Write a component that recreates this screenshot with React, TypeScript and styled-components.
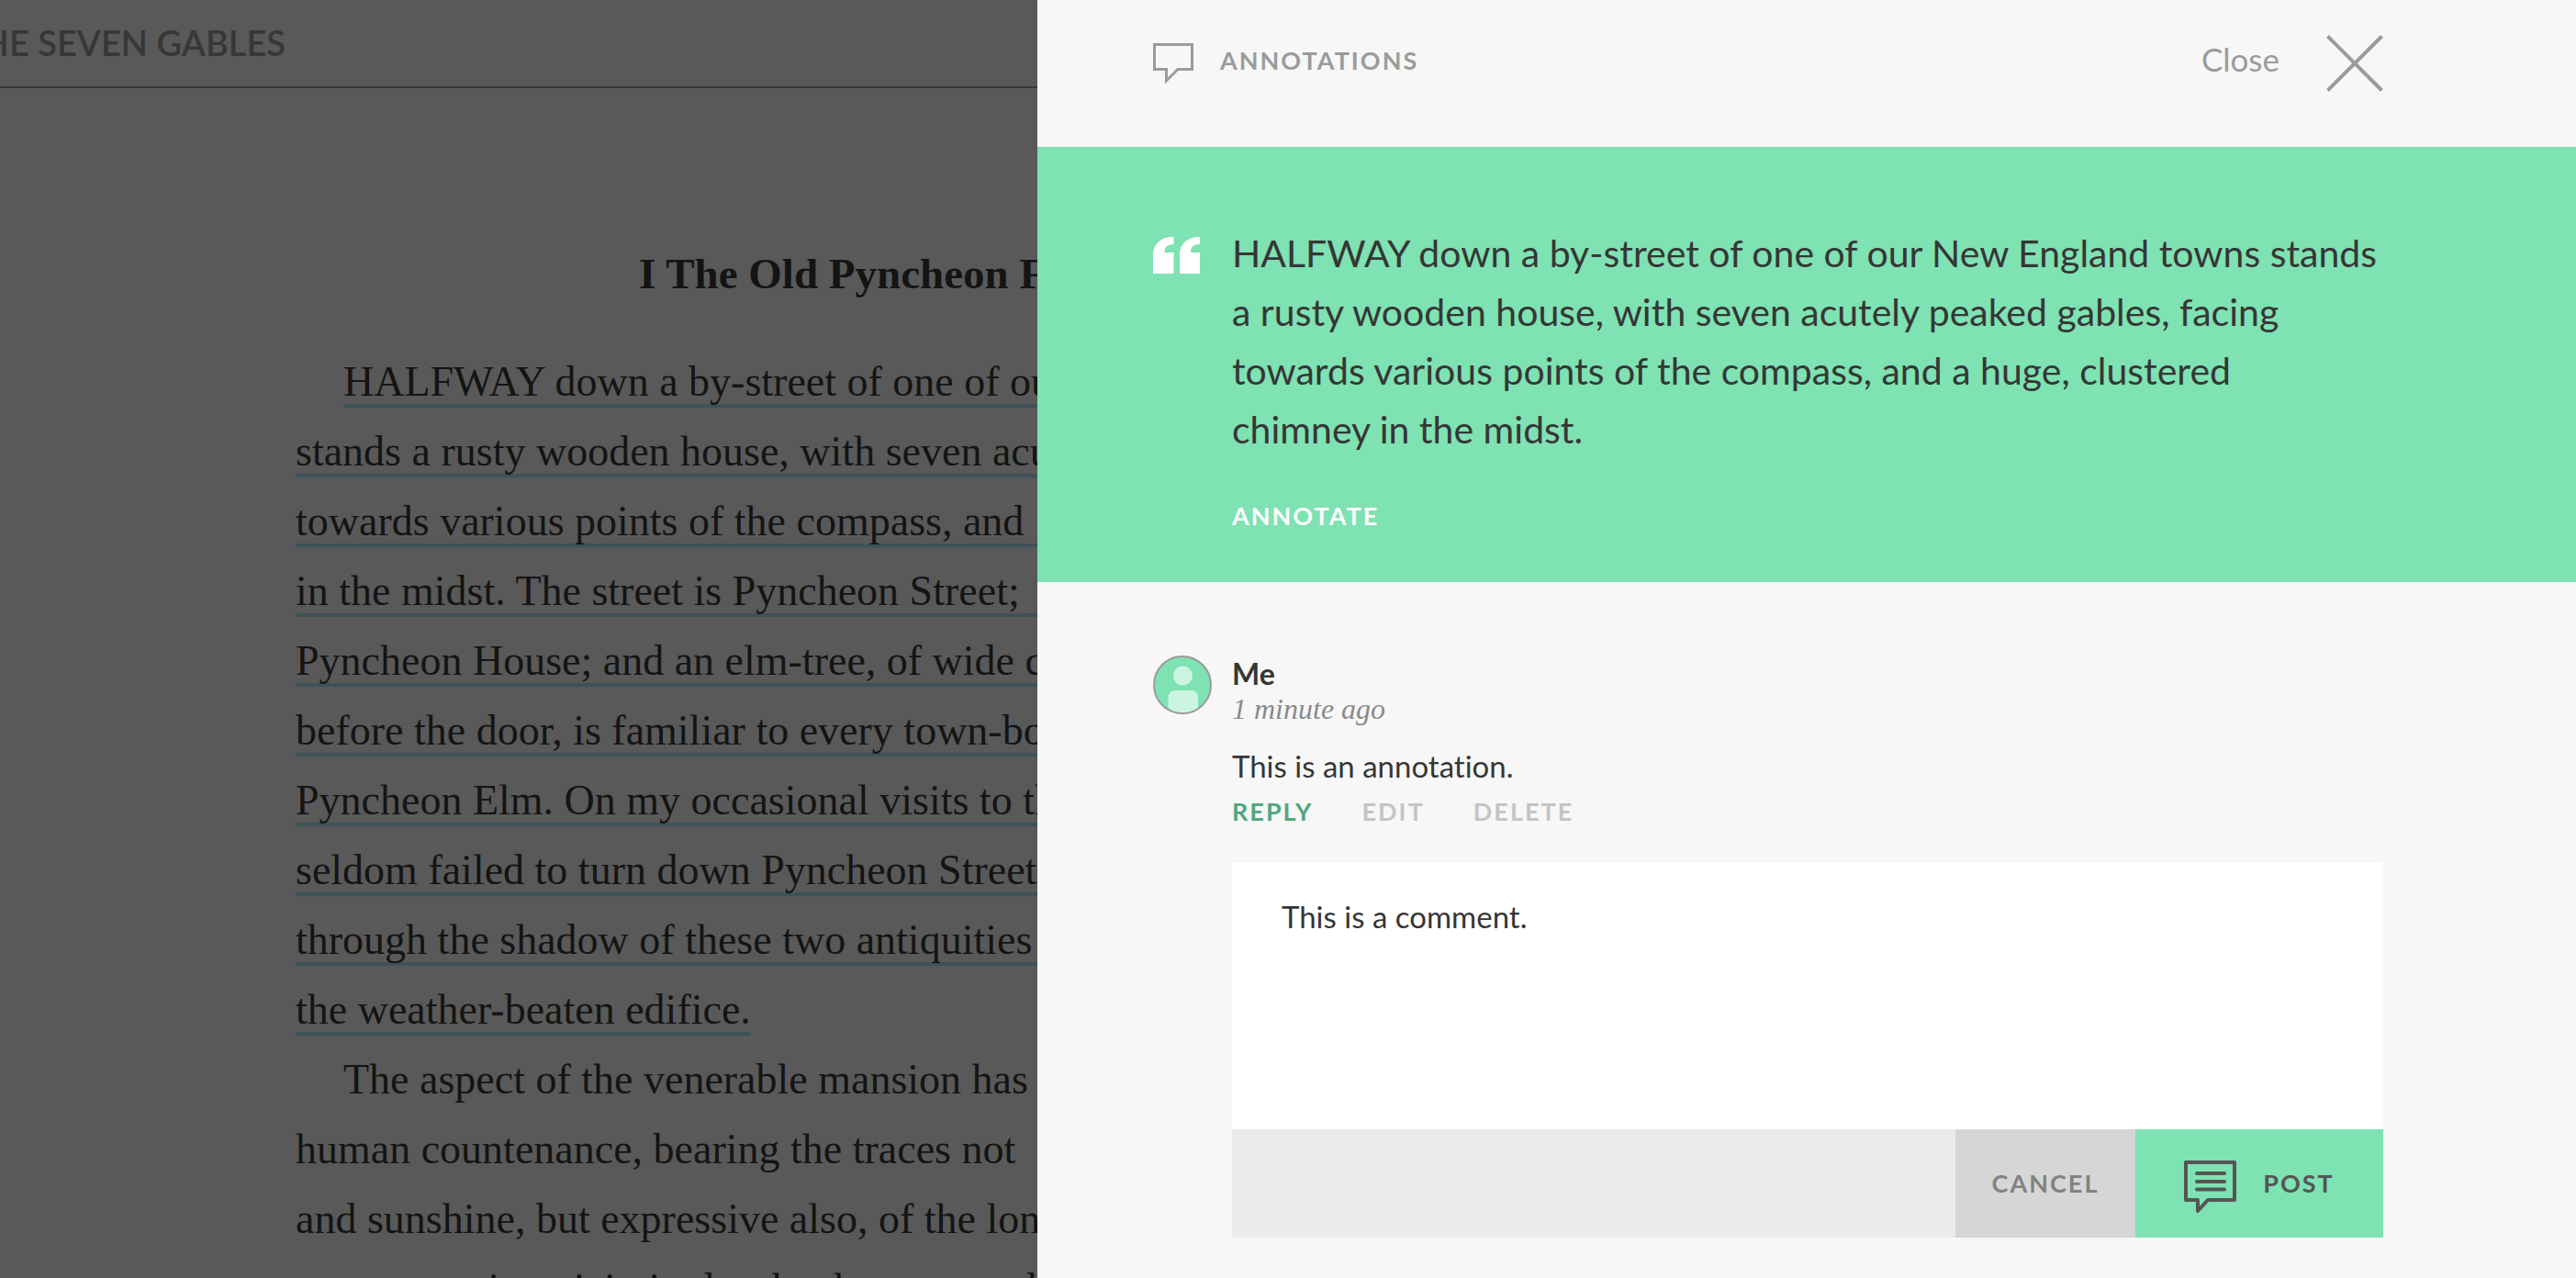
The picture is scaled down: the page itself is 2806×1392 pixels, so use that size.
import React, { useState } from 'react';
import styled, { createGlobalStyle, css } from 'styled-components';

const sans = "Lato, 'Open Sans', sans-serif";
const serif = "'Liberation Serif', 'Times New Roman', serif";
const mint = '#7ee2b2';
const ink = '#363636';

const GlobalStyle = createGlobalStyle`
  *, *::before, *::after { box-sizing: border-box; }
  body { margin: 0; background: #f7f7f7; }
  h1, h2, p, blockquote { margin: 0; }
  button, textarea { font: inherit; font-variant-ligatures: none; }
`;

const Screen = styled.div`
  display: grid;
  grid-template-columns: minmax(0, 565fr) minmax(0, 838fr);
  height: 100vh;
  overflow: hidden;
  font-family: ${sans};
`;

const Reader = styled.main`
  min-width: 0;
  overflow: hidden;
  background: #595959;
  color: #141414;
  font-family: ${serif};
`;

const ReaderHeader = styled.header`
  display: flex;
  align-items: center;
  justify-content: flex-end;
  width: 311px;
  height: 94px;
  padding-bottom: 3px;
`;

const Rule = styled.div`
  height: 2px;
  background: #373737;
`;

const BookTitle = styled.span`
  font: 600 38px/48px ${sans};
  color: #373737;
  white-space: nowrap;
`;

const Chapter = styled.article`
  padding: 164px 0 0 322px;
  font-size: 46px;
  line-height: 76px;
  white-space: nowrap;
`;

const ChapterTitle = styled.h1`
  padding: 0 0 42px 374px;
  font-size: 47px;
  line-height: 76px;
`;

const Line = styled.span<{ $indent?: boolean; $marked?: boolean; $last?: boolean }>`
  display: block;
  width: ${(p) => (p.$last ? 'fit-content' : 'auto')};
  margin-left: ${(p) => (p.$indent ? 52 : 0)}px;
  ${(p) =>
    p.$marked &&
    css`
      background: linear-gradient(#3e5258, #3e5258) 0 62px / 100% 4px no-repeat;
    `}
`;

const Panel = styled.aside`
  min-width: 0;
  background: #f7f7f7;
  color: ${ink};
  font-variant-ligatures: none;
`;

const gutters = css`
  padding-left: 126px;
  padding-right: 210px;
`;

const PanelHeader = styled.header`
  ${gutters}
  display: flex;
  align-items: flex-start;
  justify-content: space-between;
  height: 160px;
  padding-top: 38px;
  color: #9b9b9b;
`;

const PanelTitle = styled.h2`
  display: flex;
  align-items: flex-start;
  gap: 29px;
  padding-top: 8px;
  font-size: 27px;
  line-height: 40px;
  letter-spacing: 2px;
`;

const CloseButton = styled.button`
  display: flex;
  align-items: flex-start;
  gap: 51px;
  padding: 0;
  border: 0;
  background: none;
  color: inherit;
  font-size: 35px;
  line-height: 52px;
`;

const Quote = styled.section`
  ${gutters}
  display: flex;
  align-items: flex-start;
  gap: 35px;
  padding-top: 84px;
  padding-bottom: 54px;
  background: ${mint};
`;

const QuoteMark = styled.svg`
  flex: none;
  margin-top: 14px;
`;

const QuoteBody = styled.div`
  min-width: 0;
  flex: 1;
`;

const Passage = styled.blockquote`
  margin-bottom: 44px;
  font-size: 41px;
  line-height: 64px;
`;

const TextButton = styled.button<{ $color: string }>`
  display: block;
  padding: 0;
  border: 0;
  background: none;
  color: ${(p) => p.$color};
  font-size: 27px;
  font-weight: 700;
  line-height: 36px;
  letter-spacing: 2px;
`;

const Comment = styled.section`
  ${gutters}
  display: flex;
  align-items: flex-start;
  gap: 22px;
  padding-top: 80px;
`;

const CommentBody = styled.div`
  min-width: 0;
  flex: 1;
`;

const Author = styled.h2`
  font-size: 32px;
  line-height: 40px;
`;

const Time = styled.p`
  font: italic 32px/36px ${serif};
  color: #8a8a8a;
`;

const CommentText = styled.p`
  margin-top: 22px;
  font-size: 33px;
  line-height: 44px;
`;

const Actions = styled.div`
  display: flex;
  gap: 53px;
  margin: 10px 0 38px;
`;

const ReplyForm = styled.form`
  display: flex;
  flex-direction: column;
`;

const ReplyBox = styled.textarea`
  display: block;
  width: 100%;
  height: 290px;
  padding: 36px 54px;
  border: 0;
  outline: 0;
  resize: none;
  background: #fff;
  color: ${ink};
  font-size: 33px;
  line-height: 44px;
`;

const FormBar = styled.div`
  display: flex;
  justify-content: flex-end;
  height: 118px;
  background: #ebebeb;
`;

const BarButton = styled.button<{ $primary?: boolean }>`
  display: flex;
  align-items: center;
  justify-content: center;
  gap: 29px;
  width: ${(p) => (p.$primary ? 270 : 196)}px;
  padding: 0;
  border: 0;
  background: ${(p) => (p.$primary ? mint : '#d6d6d6')};
  color: ${(p) => (p.$primary ? '#555' : '#828282')};
  font-size: 27px;
  font-weight: 700;
  line-height: 36px;
  letter-spacing: 2px;
`;

const marked = [
  'HALFWAY down a by-street of one of our',
  'stands a rusty wooden house, with seven acu',
  'towards various points of the compass, and',
  'in the midst. The street is Pyncheon Street;',
  'Pyncheon House; and an elm-tree, of wide c',
  'before the door, is familiar to every town-bo',
  'Pyncheon Elm. On my occasional visits to th',
  'seldom failed to turn down Pyncheon Street',
  'through the shadow of these two antiquities',
  'the weather-beaten edifice.',
];

const plain = [
  'The aspect of the venerable mansion has',
  'human countenance, bearing the traces not',
  'and sunshine, but expressive also, of the lon',
  'accompanying vicissitudes that have passed',
];

export default function App() {
  const [reply, setReply] = useState('This is a comment.');
  return (
    <>
      <GlobalStyle />
      <Screen>
        <Reader>
          <ReaderHeader>
            <BookTitle>HE SEVEN GABLES</BookTitle>
          </ReaderHeader>
          <Rule />
          <Chapter>
            <ChapterTitle>I The Old Pyncheon F</ChapterTitle>
            <p>
              {marked.map((text, i) => (
                <Line key={text} $marked $indent={i === 0} $last={i === marked.length - 1}>
                  {text}
                </Line>
              ))}
            </p>
            <p>
              {plain.map((text, i) => (
                <Line key={text} $indent={i === 0}>{text}</Line>
              ))}
            </p>
          </Chapter>
        </Reader>

        <Panel aria-label="Annotations">
          <PanelHeader>
            <PanelTitle>
              <svg width="44" height="47" viewBox="0 0 44 47" fill="none" stroke="currentColor" strokeWidth="3" aria-hidden="true">
                <path d="M1.5 2.5H42.5V29.5H27L14.5 42V29.5H1.5Z" />
              </svg>
              ANNOTATIONS
            </PanelTitle>
            <CloseButton type="button">
              Close
              <svg width="62" height="62" viewBox="0 0 62 62" stroke="currentColor" strokeWidth="4" aria-hidden="true">
                <path d="M1.5 1.5L60.5 60.5M60.5 1.5L1.5 60.5" />
              </svg>
            </CloseButton>
          </PanelHeader>

          <Quote>
            <QuoteMark width="51" height="40" viewBox="0 0 51 40" fill="#fff" aria-hidden="true">
              <path d="M22.5 0V8C16 8 12.5 11 12.5 17H22.5V40H0V20C0 8 8 0 22.5 0ZM51 0V8C44.5 8 41 11 41 17H51V40H29V20C29 8 36.5 0 51 0Z" />
            </QuoteMark>
            <QuoteBody>
              <Passage>
                HALFWAY down a by-street of one of our New England towns stands a rusty wooden house, with seven acutely peaked gables, facing towards various points of the compass, and a huge, clustered
                <br />
                chimney in the midst.
              </Passage>
              <TextButton type="button" $color="#fff">ANNOTATE</TextButton>
            </QuoteBody>
          </Quote>

          <Comment>
            <svg width="64" height="64" viewBox="0 0 64 64" aria-hidden="true">
              <circle cx="32" cy="32" r="31" fill={mint} stroke="#9b9b9b" strokeWidth="2" />
              <circle cx="32.5" cy="22" r="10.5" fill="#cbf5e2" />
              <path d="M16.5 57V46Q16.5 38 24.5 38H41Q49 38 49 46V57Q41.5 62 32.5 62T16.5 57Z" fill="#cbf5e2" />
            </svg>
            <CommentBody>
              <Author>Me</Author>
              <Time>1 minute ago</Time>
              <CommentText>This is an annotation.</CommentText>
              <Actions>
                <TextButton type="button" $color="#54a67d">REPLY</TextButton>
                <TextButton type="button" $color="#c4c4c4">EDIT</TextButton>
                <TextButton type="button" $color="#c4c4c4">DELETE</TextButton>
              </Actions>
              <ReplyForm onSubmit={(e) => e.preventDefault()}>
                <ReplyBox
                  aria-label="Reply"
                  spellCheck={false}
                  value={reply}
                  onChange={(e) => setReply(e.target.value)}
                />
                <FormBar>
                  <BarButton type="button">CANCEL</BarButton>
                  <BarButton type="submit" $primary>
                    <svg width="57" height="63" viewBox="0 -6 57 63" fill="none" stroke="currentColor" strokeWidth="4" strokeLinejoin="round" strokeLinecap="round" aria-hidden="true">
                      <path d="M2 2H55V43H26L15 55V43H2ZM14 14H44M14 23H44M14 31.5H44" />
                    </svg>
                    POST
                  </BarButton>
                </FormBar>
              </ReplyForm>
            </CommentBody>
          </Comment>
        </Panel>
      </Screen>
    </>
  );
}
